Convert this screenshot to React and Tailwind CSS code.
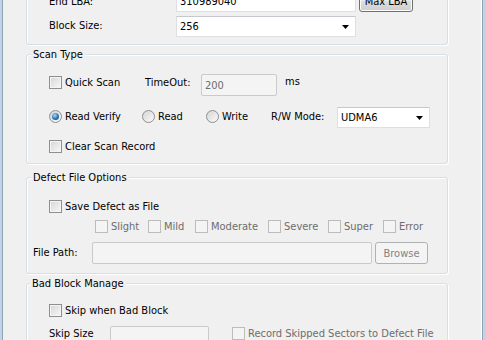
import React from "react";

function Check({ disabled }) {
  return disabled ? (
    <span className="inline-block w-[13px] h-[13px] shrink-0 border border-[#bcbcbc] bg-[#f4f4f4]" />
  ) : (
    <span className="inline-block w-[13px] h-[13px] shrink-0 border border-[#8e8f8f] bg-[linear-gradient(135deg,#d6d6d6,#f8f8f8)] shadow-[inset_0_0_0_1px_#f4f4f4]" />
  );
}

function CheckItem({ label, disabled, className = "" }) {
  return (
    <div className={`flex items-center ${className}`}>
      <Check disabled={disabled} />
      <span className={`ml-[3px] ${disabled ? "text-[#6d6d6d]" : "text-black"}`}>{label}</span>
    </div>
  );
}

function Radio({ checked }) {
  return (
    <span className="flex items-center justify-center w-[13px] h-[13px] shrink-0 rounded-full border border-[#8e8f8f] bg-[linear-gradient(135deg,#d4d4d4,#fbfbfb)]">
      {checked ? (
        <span className="block w-[7px] h-[7px] rounded-full bg-[radial-gradient(circle_at_40%_35%,#a9dcf6,#2a74b4_55%,#0f3f73)]" />
      ) : null}
    </span>
  );
}

function RadioItem({ label, checked, className = "" }) {
  return (
    <div className={`flex items-center ${className}`}>
      <Radio checked={checked} />
      <span className="ml-[3px]">{label}</span>
    </div>
  );
}

function Arrow() {
  return (
    <svg width="7" height="4" viewBox="0 0 7 4" className="shrink-0">
      <path d="M0 0 H7 L3.5 4 Z" fill="#000" />
    </svg>
  );
}

function Combo({ value, className = "" }) {
  return (
    <div
      className={`flex items-center justify-between bg-white border border-[#dcdfe3] border-t-[#c5c8cc] pl-[3px] pr-[6px] ${className}`}
    >
      <span>{value}</span>
      <Arrow />
    </div>
  );
}

function Group({ title, titleLeft, className = "", children }) {
  return (
    <div
      className={`relative ml-[23px] w-[422px] rounded-[3px] border border-[#d5dfe5] shadow-[inset_1px_1px_0_#ffffff,1px_1px_0_#ffffff] ${className}`}
    >
      {title ? (
        <span className={`absolute -top-[7px] ${titleLeft} bg-[#f0f0f0] px-[2px] leading-[13px]`}>
          {title}
        </span>
      ) : null}
      {children}
    </div>
  );
}

export default function App() {
  return (
    <div
      className="flex w-[486px] h-[340px] overflow-hidden bg-[#f0f0f0] text-[11px] leading-[13px] text-black"
      style={{ fontFamily: "'DejaVu Sans Condensed', 'Liberation Sans', sans-serif" }}
    >
      <div className="flex shrink-0">
        <div className="w-[2px] bg-[#c3d3e6]" />
        <div className="w-[1px] bg-[#8fa3b9]" />
      </div>
      <div className="flex-1 flex flex-col">
        {/* Top group (partially hidden) */}
        <Group className="-mt-[30px] pt-[20px] pb-[7px]">
          <div className="flex items-center h-[21px] pl-[22px]">
            <span className="w-[127px]">End LBA:</span>
            <div className="flex items-center w-[180px] h-[21px] bg-white border border-[#dcdfe3] border-t-[#abadb3] pl-[3px]">
              310989040
            </div>
            <button className="ml-[3px] w-[54px] h-[21px] rounded-[3px] border border-[#707070] bg-[linear-gradient(#f2f2f2,#ebebeb_50%,#dddddd_50%,#cfcfcf)] shadow-[inset_0_0_0_1px_#fcfcfc] text-[11px] leading-[13px]">
              Max LBA
            </button>
          </div>
          <div className="flex items-center h-[21px] pl-[22px] mt-[4px]">
            <span className="w-[127px] -mt-[2px]">Block Size:</span>
            <Combo value="256" className="w-[180px] h-[21px]" />
          </div>
        </Group>

        {/* Scan Type */}
        <Group title="Scan Type" titleLeft="left-[4px]" className="mt-[9px] pt-[19px] pb-[9px]">
          <div className="flex items-start h-[22px] pl-[22px]">
            <CheckItem label="Quick Scan" className="w-[96px] mt-[2px]" />
            <span className="w-[56px] mt-[2px]">TimeOut:</span>
            <div className="flex items-center w-[76px] h-[22px] rounded-[2px] border border-[#cacaca] bg-[#f4f4f4] pl-[3px] text-[#6d6d6d]">
              200
            </div>
            <span className="ml-[8px] mt-[1px]">ms</span>
          </div>
          <div className="flex items-center h-[21px] pl-[22px] mt-[11px]">
            <RadioItem label="Read Verify" checked className="w-[93px] -mt-[2px]" />
            <RadioItem label="Read" className="w-[64px] -mt-[2px]" />
            <RadioItem label="Write" className="w-[65px] -mt-[2px]" />
            <span className="w-[66px] -mt-[3px]">R/W Mode:</span>
            <Combo value="UDMA6" className="w-[93px] h-[21px]" />
          </div>
          <div className="flex items-center h-[16px] pl-[22px] mt-[10px]">
            <CheckItem label="Clear Scan Record" />
          </div>
        </Group>

        {/* Defect File Options */}
        <Group title="Defect File Options" titleLeft="left-[4px]" className="mt-[13px] pt-[20px] pb-[9px]">
          <div className="flex items-center h-[16px] pl-[22px]">
            <CheckItem label="Save Defect as File" />
          </div>
          <div className="flex items-center h-[16px] pl-[68px] mt-[4px]">
            <CheckItem label="Slight" disabled className="w-[53px]" />
            <CheckItem label="Mild" disabled className="w-[47px]" />
            <CheckItem label="Moderate" disabled className="w-[73px]" />
            <CheckItem label="Severe" disabled className="w-[60px]" />
            <CheckItem label="Super" disabled className="w-[55px]" />
            <CheckItem label="Error" disabled />
          </div>
          <div className="flex items-center h-[22px] pl-[6px] mt-[8px]">
            <span className="w-[59px] -mt-[2px]">File Path:</span>
            <div className="w-[280px] h-[22px] rounded-[2px] border border-[#cacaca] bg-[#f4f4f4]" />
            <div className="ml-[3px] flex items-center justify-center w-[53px] h-[22px] rounded-[3px] border border-[#adb2b5] bg-[#f4f4f4] text-[#838383]">
              Browse
            </div>
          </div>
        </Group>

        {/* Bad Block Manage */}
        <Group title="Bad Block Manage" titleLeft="left-[3px]" className="mt-[9px] pt-[18px] pb-[8px]">
          <div className="flex items-center h-[16px] pl-[22px]">
            <CheckItem label="Skip when Bad Block" />
          </div>
          <div className="flex items-start h-[22px] pl-[22px] mt-[8px]">
            <span className="w-[61px] mt-[1px]">Skip Size</span>
            <div className="w-[99px] h-[22px] rounded-[2px] border border-[#cacaca] bg-[#f4f4f4]" />
            <CheckItem label="Record Skipped Sectors to Defect File" disabled className="ml-[23px] mt-[1px]" />
          </div>
        </Group>
      </div>
      <div className="flex shrink-0">
        <div className="w-[1px] bg-[#ffffff]" />
        <div className="w-[1px] bg-[#8fa3b9]" />
        <div className="w-[3px] bg-[#c3d3e6]" />
      </div>
    </div>
  );
}
